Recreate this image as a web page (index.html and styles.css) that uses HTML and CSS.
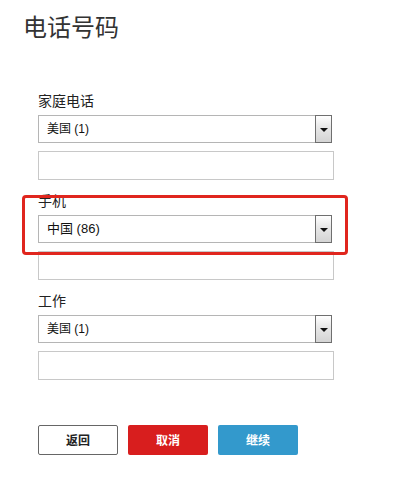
FILE: index.html
```html
<!DOCTYPE html>
<html lang="zh">
<head>
<meta charset="utf-8">
<title>电话号码</title>
<link rel="stylesheet" href="styles.css">
</head>
<body>
<div class="page">
  <h1 class="title">电话号码</h1>
  <form class="form">
    <div class="group">
      <div class="label">家庭电话</div>
      <div class="select"><span class="select-text">美国 (1)</span><span class="select-arrow"><span class="tri"></span></span></div>
      <div class="input"></div>
    </div>
    <div class="group highlight">
      <div class="label">手机</div>
      <div class="select"><span class="select-text big">中国 (86)</span><span class="select-arrow"><span class="tri"></span></span></div>
      <div class="input"></div>
      <div class="redbox"></div>
    </div>
    <div class="group">
      <div class="label">工作</div>
      <div class="select"><span class="select-text">美国 (1)</span><span class="select-arrow"><span class="tri"></span></span></div>
      <div class="input"></div>
    </div>
    <div class="buttons">
      <div class="btn btn-back">返回</div>
      <div class="btn btn-cancel">取消</div>
      <div class="btn btn-next">继续</div>
    </div>
  </form>
</div>
</body>
</html>
```

FILE: styles.css
```css
* { box-sizing: border-box; }
body {
  margin: 0;
  background: #fff;
  font-family: "Noto Sans CJK SC", "Liberation Sans", sans-serif;
  color: #333;
}
.page {
  padding: 10px 0 0 23px;
}
.title {
  margin: 0;
  font-size: 24px;
  font-weight: 400;
  line-height: 32px;
  color: #333;
}
.form {
  padding: 49px 0 0 15px;
  width: 311px;
}
.group {
  margin-bottom: 11px;
}
.highlight {
  position: relative;
}
.label {
  font-size: 14px;
  line-height: 18px;
  height: 18px;
  margin-bottom: 6px;
  color: #222;
}
.select {
  display: flex;
  width: 294px;
  height: 28px;
  border: 1px solid #b5b5b5;
  background: #fff;
  margin-bottom: 8px;
}
.select-text {
  flex: 1;
  font-family: "Liberation Sans", "Noto Sans CJK SC", sans-serif;
  font-size: 12px;
  line-height: 26px;
  padding-left: 8px;
  color: #111;
}
.select-text.big {
  font-size: 13px;
}
.select-arrow {
  width: 17px;
  height: 28px;
  margin: -1px -1px -1px 0;
  border: 1px solid #6f6f6f;
  background: linear-gradient(#ffffff, #e9e9e9 40%, #d4d4d4);
  display: flex;
  align-items: center;
  justify-content: center;
}
.tri {
  width: 0;
  height: 0;
  border-left: 4px solid transparent;
  border-right: 4px solid transparent;
  border-top: 4px solid #111;
  margin-top: 2px;
}
.input {
  width: 296px;
  height: 29px;
  border: 1px solid #c8c8c8;
  background: #fff;
}
.redbox {
  position: absolute;
  left: -16px;
  top: 4px;
  width: 326px;
  height: 60px;
  border: 3px solid #e0261e;
  border-radius: 4px;
}
.buttons {
  display: flex;
  gap: 10px;
  margin-top: 45px;
}
.btn {
  width: 80px;
  height: 30px;
  line-height: 30px;
  text-align: center;
  font-size: 12px;
  font-weight: 700;
  border-radius: 2px;
}
.btn-back {
  border: 1px solid #666;
  line-height: 28px;
  color: #222;
  background: #fff;
}
.btn-cancel {
  background: #d81e1e;
  color: #fff;
}
.btn-next {
  background: #3399cc;
  color: #fff;
}
```
